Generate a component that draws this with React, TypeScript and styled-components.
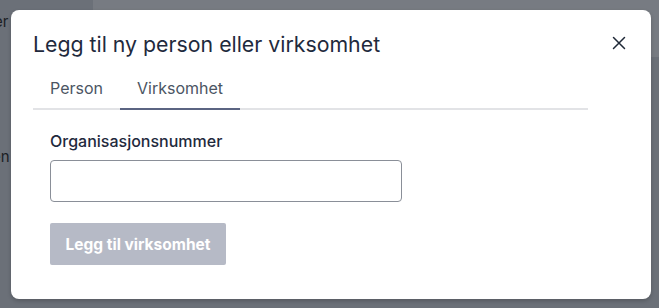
import styled, { createGlobalStyle } from 'styled-components';

const GlobalStyle = createGlobalStyle`
  html, body {
    margin: 0;
    padding: 0;
    width: 659px;
    height: 308px;
    overflow: hidden;
    font-family: Inter, "Noto Sans", sans-serif;
  }
`;

export default function App() {
  return (
    <_Page>
      <GlobalStyle />
      <_Backdrop>
        <_BgTop>
          <_BgText>er</_BgText>
          <_BgBar />
        </_BgTop>
        <_BgLine>en</_BgLine>
      </_Backdrop>

      <_Overlay>
        <_Modal>
          <_Header>
            <_Title>Legg til ny person eller virksomhet</_Title>
            <_Close aria-label="Lukk">
              <svg width="14" height="14" viewBox="0 0 14 14" fill="none">
                <path d="M1.5 1.5L12.5 12.5M12.5 1.5L1.5 12.5" stroke="#1f2937" strokeWidth="1.5" strokeLinecap="round" />
              </svg>
            </_Close>
          </_Header>

          <_Tabs>
            <_Tab>Person</_Tab>
            <_Tab $active>Virksomhet</_Tab>
          </_Tabs>

          <_Form>
            <_Label>Organisasjonsnummer</_Label>
            <_Input />
            <_Button disabled>Legg til virksomhet</_Button>
          </_Form>
        </_Modal>
      </_Overlay>
    </_Page>
  );
}

const _Page = styled.div`
  position: relative;
  width: 659px;
  height: 308px;
  background: #6b7078;
  overflow: hidden;
`;

const _Backdrop = styled.div`
  display: flex;
  flex-direction: column;
  height: 100%;
`;

const _BgTop = styled.div`
  display: flex;
  height: 57px;
`;

const _BgText = styled.div`
  width: 93px;
  padding-top: 12px;
  text-indent: -6px;
  font-size: 15px;
  color: #1b1e24;
`;

const _BgBar = styled.div`
  flex: 1;
  background: #777b82;
`;

const _BgLine = styled.div`
  margin-top: 90px;
  text-indent: -8px;
  font-size: 15px;
  color: #1b1e24;
`;

const _Overlay = styled.div`
  position: absolute;
  inset: 0;
  padding: 10px 8px 9px 11px;
  box-sizing: border-box;
`;

const _Modal = styled.div`
  width: 640px;
  height: 289px;
  box-sizing: border-box;
  background: #ffffff;
  border-radius: 8px;
  box-shadow: 0 2px 4px rgba(0, 0, 0, 0.2);
  padding: 21px 22px 0 22px;
  display: flex;
  flex-direction: column;
`;

const _Header = styled.div`
  display: flex;
  align-items: center;
  justify-content: space-between;
`;

const _Title = styled.h2`
  margin: 0;
  font-size: 21.3px;
  font-weight: 400;
  line-height: 26px;
  color: #1f2a3d;
`;

const _Close = styled.button`
  border: none;
  background: none;
  padding: 0;
  margin-right: 3px;
  margin-top: -2px;
  display: flex;
  cursor: pointer;
`;

const _Tabs = styled.div`
  display: flex;
  width: 555px;
  margin-top: 21px;
  border-bottom: 2px solid #e2e3e6;
`;

const _Tab = styled.div<{ $active?: boolean }>`
  padding: 0 17px 10px;
  margin-bottom: -2px;
  font-size: 16px;
  line-height: 20px;
  color: #4b5563;
  border-bottom: 2px solid ${({ $active }) => ($active ? '#5b6482' : 'transparent')};
`;

const _Form = styled.div`
  display: flex;
  flex-direction: column;
  align-items: flex-start;
  padding: 21px 17px 0;
`;

const _Label = styled.label`
  font-size: 16px;
  font-weight: 500;
  line-height: 20px;
  color: #1f2a3d;
`;

const _Input = styled.input`
  margin-top: 9px;
  width: 352px;
  height: 42px;
  box-sizing: border-box;
  border: 1px solid #8a8f98;
  border-radius: 4px;
  outline: none;
`;

const _Button = styled.button`
  margin-top: 21px;
  width: 176px;
  height: 42px;
  border: none;
  border-radius: 2px;
  background: #b6bac6;
  color: #ffffff;
  font-family: Inter, "Noto Sans", sans-serif;
  font-size: 15.5px;
  font-weight: 700;
`;
